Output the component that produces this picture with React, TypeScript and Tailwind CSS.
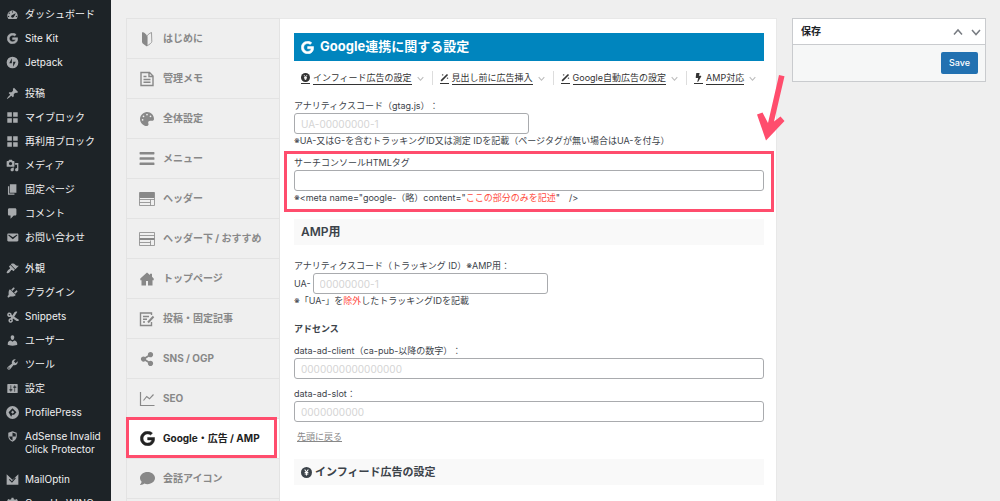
import React from "react";
import { FaBars, FaBolt, FaComment, FaCut, FaGoogle, FaPalette, FaShareAlt } from "react-icons/fa";

type IconProps = { className?: string };

function Glyph({ d }: { d: string }) {
  return (
    <svg viewBox="0 0 20 20" className="size-[13px]" fill="currentColor" fillRule="evenodd" aria-hidden="true">
      <path d={d} />
    </svg>
  );
}

const glyphs = {
  dashboard:
    "M3.76 17h12.48c1.1-1.37 1.76-3.11 1.76-5 0-4.42-3.58-8-8-8s-8 3.58-8 8c0 1.89.66 3.63 1.76 5zM9 6c0-.55.45-1 1-1s1 .45 1 1c0 .56-.45 1-1 1s-1-.44-1-1zM4 8c0-.55.45-1 1-1s1 .45 1 1-.45 1-1 1-1-.45-1-1zm4.52 3.4c.84-.83 6.51-3.5 6.51-3.5s-2.66 5.68-3.49 6.51c-.84.84-2.18.84-3.02 0-.83-.83-.83-2.18 0-3.01zM3 13c0-.55.45-1 1-1s1 .45 1 1c0 .56-.45 1-1 1s-1-.44-1-1zm12 0c0-.55.45-1 1-1s1 .45 1 1c0 .56-.45 1-1 1s-1-.44-1-1z",
  pin: "M10.44 3.02l1.82-1.82 6.36 6.35-1.83 1.82c-1.05-.68-2.48-.57-3.41.36l-.75.75c-.92.93-1.04 2.35-.35 3.41l-1.83 1.82-2.41-2.41-2.8 2.79c-.42.42-3.38 2.71-3.8 2.29s1.86-3.39 2.28-3.81l2.79-2.79L4.1 9.36l1.83-1.82c1.05.69 2.48.57 3.4-.36l.75-.75c.93-.92 1.05-2.35.36-3.41z",
  grid: "M2 2h7v7H2zM11 2h7v7h-7zM2 11h7v7H2zM11 11h7v7h-7z",
  media:
    "M13 11V4c0-.55-.45-1-1-1h-1.67L9 1H5L3.67 3H2c-.55 0-1 .45-1 1v7c0 .55.45 1 1 1h10c.55 0 1-.45 1-1zM7 4.5c1.38 0 2.5 1.12 2.5 2.5S8.38 9.5 7 9.5 4.5 8.38 4.5 7 5.62 4.5 7 4.5zM14 6h5v10.5c0 1.38-1.12 2.5-2.5 2.5S14 17.88 14 16.5s1.12-2.5 2.5-2.5c.17 0 .34.02.5.05V9h-3V6zm-4 8.05V13h2v3.5c0 1.38-1.12 2.5-2.5 2.5S7 17.88 7 16.5 8.12 14 9.5 14c.17 0 .34.02.5.05z",
  page: "M6 15V2h10v13H6zm-1 1h8v2H3V5h2v11z",
  comment: "M5 2h9c1.1 0 2 .9 2 2v7c0 1.1-.9 2-2 2h-2l-5 5v-5H5c-1.1 0-2-.9-2-2V4c0-1.1.9-2 2-2z",
  mail: "M3.87 4h13.25C18.37 4 19 4.59 19 5.79v8.42c0 1.19-.63 1.79-1.88 1.79H3.87c-1.25 0-1.88-.6-1.88-1.79V5.79c0-1.2.63-1.79 1.88-1.79zm6.62 8.6l6.74-5.53c.24-.2.43-.66.13-1.07-.29-.41-.82-.42-1.17-.17l-5.7 3.86L4.8 5.83c-.35-.25-.88-.24-1.17.17-.3.41-.11.87.13 1.07z",
  brush:
    "M14.48 11.06L7.41 3.99l1.5-1.5c.5-.56 2.3-.47 3.51.32 1.21.8 1.43 1.28 2.91 2.1 1.18.64 2.45 1.26 4.45.85zm-.71.71L6.7 4.7 4.93 6.47c-.39.39-.39 1.02 0 1.41l1.06 1.06c.39.39.39 1.03 0 1.42-.6.6-1.43 1.11-2.21 1.69-.35.26-.7.53-1.01.84C1.43 14.23.4 16.08 1.4 17.07c.99 1 2.84-.03 4.18-1.36.31-.31.58-.66.85-1.02.57-.78 1.08-1.61 1.69-2.21.39-.39 1.02-.39 1.41 0l1.06 1.06c.39.39 1.02.39 1.41 0z",
  plug: "M13.11 4.36L9.87 7.6 8 5.73l3.24-3.24c.35-.34 1.05-.2 1.56.32.52.51.66 1.21.31 1.55zm-8 1.77l.91-1.12 9.01 9.01-1.19.84c-.71.71-2.63 1.16-3.82 1.16H6.14L4.9 17.26c-.59.59-1.54.59-2.12 0-.59-.58-.59-1.53 0-2.12l1.24-1.24v-3.88c0-1.13.4-3.19 1.09-3.89zm7.26 3.97l3.24-3.24c.34-.35 1.04-.21 1.55.31.52.51.66 1.21.31 1.55l-3.24 3.25z",
  user: "M10 9.25c-2.27 0-2.73-3.44-2.73-3.44C7 4.02 7.82 2 9.97 2c2.16 0 2.98 2.02 2.71 3.81 0 0-.41 3.44-2.68 3.44zm0 2.57L12.72 10c2.39 0 4.52 2.33 4.52 4.53v2.49s-3.65 1.13-7.24 1.13c-3.65 0-7.24-1.13-7.24-1.13v-2.49c0-2.25 1.94-4.48 4.47-4.48z",
  wrench:
    "M16.68 9.77c-1.34 1.34-3.3 1.67-4.95.99l-5.41 6.52c-.99.99-2.59.99-3.58 0s-.99-2.59 0-3.57l6.52-5.42c-.68-1.65-.35-3.61.99-4.95 1.28-1.28 3.12-1.62 4.72-1.06l-2.89 2.89 2.82 2.82 2.86-2.87c.53 1.58.18 3.39-1.08 4.65zM3.81 16.21c.4.39 1.04.39 1.43 0 .4-.4.4-1.04 0-1.43-.39-.4-1.03-.4-1.43 0-.39.39-.39 1.03 0 1.43z",
  sliders:
    "M18 16V4c0-.55-.45-1-1-1H3c-.55 0-1 .45-1 1v12c0 .55.45 1 1 1h14c.55 0 1-.45 1-1zM8 11h1c.55 0 1 .45 1 1s-.45 1-1 1H8v1.5c0 .28-.22.5-.5.5s-.5-.22-.5-.5V13H6c-.55 0-1-.45-1-1s.45-1 1-1h1V5.5c0-.28.22-.5.5-.5s.5.22.5.5V11zm5-2h-1c-.55 0-1-.45-1-1s.45-1 1-1h1V5.5c0-.28.22-.5.5-.5s.5.22.5.5V7h1c.55 0 1 .45 1 1s-.45 1-1 1h-1v5.5c0 .28-.22.5-.5.5s-.5-.22-.5-.5V9z",
  jetpack: "M10 1a9 9 0 1 0 0 18a9 9 0 1 0 0-18zM9 3.6v7.6H5zM11 16.4V8.8h4z",
  profile: "M10 0a10 10 0 1 0 0 20a10 10 0 1 0 0-20zM10 3.5l6 6l-3.5 3.8h-3l-1.6 3.2l-3.9-7zM10.3 7l-2.5 2.6l2.5 2.3l2.3-2.4z",
  shield: "M10 2l6.500 2.200v5.500c0 4-2.700 7-6.500 8.300c-3.800-1.300-6.500-4.300-6.500-8.300v-5.500zM10 4v6H5c.5 3 2.200 5 5 6.200V10h5V5.600z",
  mailoptin: "M1 2l9 8.500L19 2v16H1zM4.500 10.500l4.700 4.500l6-7l-1.200-1l-4.900 5.500l-3.300-3.300z",
  gear: "M8.500 1h3l.5 2.500l2 .8l2.200-1.300l2 2l-1.400 2.200l.8 2l2.400.5v3l-2.400.5l-.8 2l1.400 2.200l-2 2l-2.200-1.400l-2 .8l-.5 2.400h-3l-.5-2.400l-2-.8l-2.200 1.400l-2-2l1.400-2.200l-.8-2L0 12.700v-3l2.400-.5l.8-2L1.800 5l2-2L6 4.300l2-.8zM10 8a3 3 0 1 0 0 6a3 3 0 1 0 0-6z",
};

const adminGroups: { label: string; icon: React.ReactNode }[][] = [
  [
    { label: "ダッシュボード", icon: <Glyph d={glyphs.dashboard} /> },
    { label: "Site Kit", icon: <FaGoogle className="size-[11px]" stroke="currentColor" strokeWidth="24" /> },
    { label: "Jetpack", icon: <Glyph d={glyphs.jetpack} /> },
  ],
  [
    { label: "投稿", icon: <Glyph d={glyphs.pin} /> },
    { label: "マイブロック", icon: <Glyph d={glyphs.grid} /> },
    { label: "再利用ブロック", icon: <Glyph d={glyphs.grid} /> },
    { label: "メディア", icon: <Glyph d={glyphs.media} /> },
    { label: "固定ページ", icon: <Glyph d={glyphs.page} /> },
    { label: "コメント", icon: <Glyph d={glyphs.comment} /> },
    { label: "お問い合わせ", icon: <Glyph d={glyphs.mail} /> },
  ],
  [
    { label: "外観", icon: <Glyph d={glyphs.brush} /> },
    { label: "プラグイン", icon: <Glyph d={glyphs.plug} /> },
    { label: "Snippets", icon: <FaCut className="size-3 -rotate-12" /> },
    { label: "ユーザー", icon: <Glyph d={glyphs.user} /> },
    { label: "ツール", icon: <Glyph d={glyphs.wrench} /> },
    { label: "設定", icon: <Glyph d={glyphs.sliders} /> },
    { label: "ProfilePress", icon: <Glyph d={glyphs.profile} /> },
    { label: "AdSense Invalid Click Protector", icon: <Glyph d={glyphs.shield} /> },
  ],
  [
    { label: "MailOptin", icon: <Glyph d={glyphs.mailoptin} /> },
    { label: "ConoHa WING", icon: <Glyph d={glyphs.gear} /> },
  ],
];

function BeginnerIcon() {
  return (
    <svg viewBox="0 0 16 16" className="size-4" aria-hidden="true">
      <path d="M3.500 1C6 2 8 3.500 8 5.500v10C6 14 3 12.500 3 11V2z" fill="currentColor" />
      <path d="M12.500 1.500C10 2.500 8.200 4 8.200 5.500v9.300c2-1.300 4.600-2.800 4.600-4.300z" fill="none" stroke="currentColor" strokeWidth=".8" />
    </svg>
  );
}

function MemoIcon() {
  return (
    <svg viewBox="0 0 16 16" className="size-4" fill="none" stroke="currentColor" strokeWidth="1.400" aria-hidden="true">
      <path d="M2 1.500h8.500L14 5v9.500H2zM10 1.500v4h4M4.500 5.500h3M4.500 8.500h7M4.500 11.300h7" />
    </svg>
  );
}

function HeaderIcon() {
  return (
    <svg viewBox="0 0 16 16" className="size-4" fill="none" stroke="currentColor" aria-hidden="true">
      <path d="M.5 1.500h15v13H.5zM.5 8.500h15M11.500 8.500v6M.5 11.500h11" strokeWidth=".8" />
      <path d="M1 1.500h14v5H1z" fill="currentColor" />
    </svg>
  );
}

function SubHeaderIcon() {
  return (
    <svg viewBox="0 0 16 16" className="size-4" fill="none" stroke="currentColor" strokeWidth=".8" aria-hidden="true">
      <path d="M.5 1.500h15v13H.5zM.5 4.500h15M11.500 9.500v5M.5 11.500h11" />
      <path d="M.5 8h15" strokeWidth="2" />
    </svg>
  );
}

function HouseIcon() {
  return (
    <svg viewBox="0 0 14 14" className="size-[14px]" fill="currentColor" fillRule="evenodd" aria-hidden="true">
      <path d="M7 .5L10 3V1.800h2v3l1.700 1.700v1.700H12.500V13.500H1.500V8.200H.3V6.500zM6 9v4.500h2V9z" />
    </svg>
  );
}

function PostIcon() {
  return (
    <svg viewBox="0 0 16 16" className="size-4" fill="none" stroke="currentColor" strokeWidth="1.400" aria-hidden="true">
      <path d="M12.500 4V2h-11v12.500h11V11M4 5.500h6M4 8.300h4M4 11h2" />
      <path d="M14.500 5.500L9 11.500" strokeWidth="2" />
    </svg>
  );
}

function ChartIcon() {
  return (
    <svg viewBox="0 0 16 16" className="size-4" fill="none" stroke="currentColor" strokeWidth="1.200" aria-hidden="true">
      <path d="M1.500 1v13.500h14M4.500 9.500l3.200-4l2.800 2.300l4-4.300" />
    </svg>
  );
}

const tabs: { label: string; icon: React.ReactNode; active?: boolean }[] = [
  { label: "はじめに", icon: <BeginnerIcon /> },
  { label: "管理メモ", icon: <MemoIcon /> },
  { label: "全体設定", icon: <FaPalette className="size-[14px]" /> },
  { label: "メニュー", icon: <FaBars className="size-[17px]" /> },
  { label: "ヘッダー", icon: <HeaderIcon /> },
  { label: "ヘッダー下 / おすすめ", icon: <SubHeaderIcon /> },
  { label: "トップページ", icon: <HouseIcon /> },
  { label: "投稿・固定記事", icon: <PostIcon /> },
  { label: "SNS / OGP", icon: <FaShareAlt className="size-[14px]" /> },
  { label: "SEO", icon: <ChartIcon /> },
  {
    label: "Google・広告 / AMP",
    icon: <FaGoogle className="size-[15px]" stroke="currentColor" strokeWidth="16" />,
    active: true,
  },
  { label: "会話アイコン", icon: <FaComment className="size-[15px]" /> },
  { label: "", icon: null },
];

function YenIcon({ className }: IconProps) {
  return (
    <svg viewBox="0 0 12 12" className={className} aria-hidden="true">
      <circle cx="6" cy="6" r="6" fill="currentColor" />
      <path d="M4 2.800l2 2.700l2-2.700M6 5.500v3.800M4 6h4M4 7.700h4" fill="none" stroke="#fff" strokeWidth="1.100" />
    </svg>
  );
}

function WandIcon({ className }: IconProps) {
  return (
    <svg viewBox="0 0 12 12" className={className} fill="none" stroke="currentColor" aria-hidden="true">
      <path d="M1.500 10.500L10 2" strokeWidth="2.200" />
      <path d="M2.500 2.500h2M3.500 1.500v2M9 7h2M10 6v2" strokeWidth=".7" />
    </svg>
  );
}

function Chevron({ up = false, className }: IconProps & { up?: boolean }) {
  return (
    <svg viewBox="0 0 10 10" className={className} fill="none" stroke="currentColor" strokeWidth="1.500" aria-hidden="true">
      <path d={up ? "M1 7.500L5 3l4 4.500" : "M1 3l4 4.500L9 3"} />
    </svg>
  );
}

const sections = [
  { label: "インフィード広告の設定", icon: <YenIcon className="size-[9px]" /> },
  { label: "見出し前に広告挿入", icon: <WandIcon className="size-[9px]" /> },
  { label: "Google自動広告の設定", icon: <WandIcon className="size-[9px]" /> },
  { label: "AMP対応", icon: <FaBolt className="size-[9px]" /> },
];

const fieldClass =
  "block h-[21px] rounded-[3px] border border-[#a9abae] bg-white px-1.5 text-[10px] text-[#2c3338] placeholder:text-[#d4d4d4] outline-none focus:border-[#2271b1]";

export default function App() {
  return (
    <div
      lang="ja"
      className="flex h-screen items-stretch overflow-hidden bg-[#efefef] font-[Inter,'Noto_Sans_CJK_JP',sans-serif] text-[9px] text-[#3c434a] [text-spacing-trim:space-all]"
    >
      <nav aria-label="管理メニュー" className="flex w-[111px] shrink-0 flex-col gap-[7px] bg-[#1d2327] pt-[3px] text-[10px] text-[#f0f0f1]">
        {adminGroups.map((group, index) => (
          <ul key={index}>
            {group.map((item) => (
              <li key={item.label}>
                <a href="#" className="flex min-h-6 items-start gap-[6px] py-[5px] pl-[6px] pr-2 leading-[13px]">
                  <span className="flex h-[13px] w-[13px] shrink-0 items-center justify-center text-[#a7aaad]">{item.icon}</span>
                  <span>{item.label}</span>
                </a>
              </li>
            ))}
          </ul>
        ))}
      </nav>

      <div className="mt-[18px] ml-[15px] flex min-w-0 flex-1">
        <nav aria-label="設定カテゴリ" className="w-[154px] shrink-0 border border-b-0 border-[#e3e3e3] text-[10px] font-bold text-[#888]">
          {tabs.map((tab, index) => (
            <a
              key={index}
              href="#"
              className={
                tab.active
                  ? "relative flex h-10 items-center gap-2 border-b border-[#e3e3e3] bg-white pl-3 text-[#222]"
                  : "flex h-10 items-center gap-2 border-b border-[#e3e3e3] pl-3"
              }
            >
              <span className="flex w-4 shrink-0 items-center justify-center">{tab.icon}</span>
              <span className="whitespace-nowrap">{tab.label}</span>
              {tab.active && <span className="absolute -top-[2px] right-[2px] bottom-0 -left-px border-[3px] border-[#ff4d6d]" />}
            </a>
          ))}
        </nav>

        <main className="relative min-w-0 flex-1 border-t border-r border-[#e8e8e8] bg-white pt-[14px] pr-3 pl-[14px]">
          <h1 className="flex h-7 items-center gap-[6px] bg-[#0085be] pl-[7px] text-[13px] font-bold text-white">
            <FaGoogle className="size-[13px]" stroke="currentColor" strokeWidth="20" />
            Google連携に関する設定
          </h1>

          <ul className="mt-[10px] flex h-[14px] items-center whitespace-nowrap text-[#333]">
            {sections.map((section) => (
              <li key={section.label} className="flex h-[14px] items-center border-r border-[#ddd] pr-2 pl-[7px] last:border-r-0 last:pr-0">
                <a href="#" className="flex items-center gap-[3px] leading-[12px]">
                  <span className="border-b border-[#333] pb-px">{section.icon}</span>
                  <span className="border-b border-[#333]">{section.label}</span>
                </a>
                <Chevron className="ml-[5px] size-[7px] text-[#bbb]" />
              </li>
            ))}
          </ul>

          <div className="mt-[14px] leading-[14px]">
            <label htmlFor="gtag" className="block">アナリティクスコード（gtag.js）：</label>
            <input id="gtag" placeholder="UA-00000000-1" className={`${fieldClass} w-1/2`} />
            <p className="whitespace-nowrap">※UA-又はG-を含むトラッキングID又は測定 IDを記載（ページタグが無い場合はUA-を付与）</p>
          </div>

          <div className="relative mt-2 leading-[14px]">
            <label htmlFor="console" className="block">サーチコンソールHTMLタグ</label>
            <input id="console" className={`${fieldClass} w-full`} />
            <p>
              ※&lt;meta name="google-（略）content="<span className="text-[#ff4a3d]">ここの部分のみを記述</span>"　/&gt;
            </p>
            <span className="pointer-events-none absolute -inset-x-[10px] -top-[5px] -bottom-[7px] border-[3px] border-[#ff4d6d]" />
          </div>

          <h2 className="mt-[14px] flex h-[26px] items-center bg-[#f9f9f9] pl-[7px] text-[12px] font-semibold">AMP用</h2>

          <div className="mt-[14px] leading-[14px]">
            <label htmlFor="amp" className="block">アナリティクスコード（トラッキング ID）※AMP用：</label>
            <div className="flex items-center gap-[2px]">
              <span>UA-</span>
              <input id="amp" placeholder="00000000-1" className={`${fieldClass} w-1/2`} />
            </div>
            <p>
              ※「UA-」を<span className="text-[#ff4a3d]">除外</span>したトラッキングIDを記載
            </p>
          </div>

          <h3 className="mt-[14px] leading-[14px] font-bold">アドセンス</h3>

          <div className="mt-2 leading-[14px]">
            <label htmlFor="client" className="block">data-ad-client（ca-pub-以降の数字）：</label>
            <input id="client" placeholder="0000000000000000" className={`${fieldClass} w-full`} />
          </div>
          <div className="mt-2 leading-[14px]">
            <label htmlFor="slot" className="block">data-ad-slot：</label>
            <input id="slot" placeholder="0000000000" className={`${fieldClass} w-full`} />
          </div>

          <a href="#" className="mt-2 ml-[3px] block w-fit leading-[14px] text-[#888] underline">先頭に戻る</a>

          <h2 className="mt-[15px] flex h-[26px] items-center gap-[3px] bg-[#f9f9f9] pl-[7px] text-[11px] font-semibold">
            <YenIcon className="size-[11px]" />
            インフィード広告の設定
          </h2>

          <svg viewBox="0 0 28 66" className="absolute top-[56px] -right-[9px] h-[66px] w-7" fill="#ff4d6d" aria-hidden="true">
            <path d="M22 0l5.500 1.200L17 46.500l6.500-5L27.500 46L9 65.500L0 39.500l5.500-2l5.500 10.500z" />
          </svg>
        </main>
      </div>

      <aside className="mt-[18px] mr-[14px] ml-[15px] w-[194px] shrink-0">
        <section className="border border-[#c9cbce]">
          <div className="flex h-[26px] items-center border-b border-[#c9cbce] bg-white pr-1 pl-2">
            <h2 className="flex-1 text-[10px] font-bold text-[#1d2327]">保存</h2>
            <button type="button" aria-label="上に移動" className="text-[#787c82]">
              <Chevron up className="size-[10px]" />
            </button>
            <button type="button" aria-label="下に移動" className="ml-2 text-[#787c82]">
              <Chevron className="size-[10px]" />
            </button>
          </div>
          <div className="flex justify-end bg-[#f6f7f7] p-[7px]">
            <button type="button" className="h-[22px] rounded-[2px] bg-[#2271b1] px-2 text-[9px] font-medium text-white">
              Save
            </button>
          </div>
        </section>
      </aside>
    </div>
  );
}
